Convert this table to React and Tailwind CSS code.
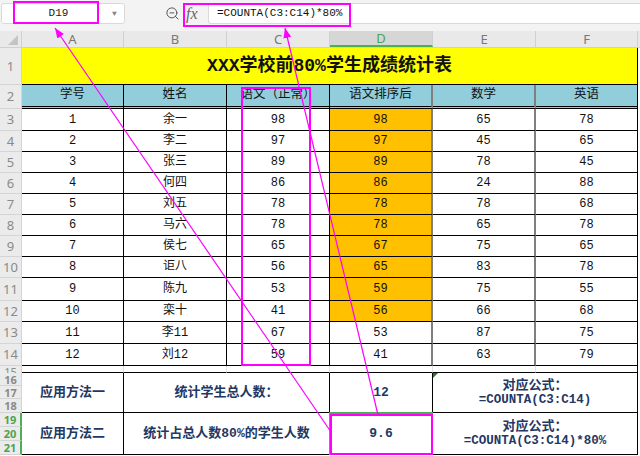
import { ZoomOut } from 'lucide-react';

const students = [
  [1, '余一', 98, 98, 65, 78],
  [2, '李二', 97, 97, 45, 65],
  [3, '张三', 89, 89, 78, 45],
  [4, '何四', 86, 86, 24, 88],
  [5, '刘五', 78, 78, 78, 68],
  [6, '马六', 78, 78, 65, 78],
  [7, '侯七', 65, 67, 75, 65],
  [8, '讵八', 56, 65, 83, 78],
  [9, '陈九', 53, 59, 75, 55],
  [10, '栾十', 41, 56, 66, 68],
  [11, '李11', 67, 53, 87, 75],
  [12, '刘12', 59, 41, 63, 79],
];

const rowHeights = [
  'h-[22px]', 'h-[21px]', 'h-[21px]', 'h-[21px]', 'h-[21px]', 'h-[21px]',
  'h-[21px]', 'h-[21px]', 'h-[23px]', 'h-[21px]', 'h-[22px]', 'h-[22px]',
];

const cols = ['A', 'B', 'C', 'D', 'E', 'F'];
const colWidths = ['w-[102px]', 'w-[103px]', 'w-[103px]', 'w-[103px]', 'w-[103px]', 'w-[102px]'];

function RowNum({ n, className = '', active = false }) {
  return (
    <div
      className={`w-[22px] shrink-0 flex items-center justify-center bg-[#ebebeb] border-b border-[#d4d4d4] font-['Noto_Sans',sans-serif] leading-none overflow-hidden ${
        active ? 'text-[#4ea34e] border-r-2 border-r-[#4caf50]' : 'text-[#8a8a8a] border-r border-r-[#d4d4d4]'
      } ${className}`}
    >
      {n}
    </div>
  );
}

function Toolbar() {
  return (
    <div className="h-[31px] flex items-start pt-[3px] bg-[#f3f3f3]">
      <div className="ml-[1px] w-[124px] h-[21px] bg-white border border-[#d9d9d9] rounded-[3px] flex items-center">
        <span className="flex-1 text-center pl-[3px] text-[11px] text-[#222]">D19</span>
        <span className="w-[12px] text-[8px] text-[#888] leading-none">▼</span>
      </div>
      <div className="ml-[40px] mt-[3px] text-[#555]">
        <ZoomOut size={15} strokeWidth={1.6} />
      </div>
      <span className="ml-[6px] mt-[1px] w-[20px] text-[16px] italic text-[#666] font-['Liberation_Serif',serif] leading-[20px]">
        fx
      </span>
      <div className="ml-[2px] flex-1 h-[21px] bg-white border border-r-0 border-[#d9d9d9] rounded-l-[3px] flex items-center pl-[8px] text-[11px] text-[#111]">
        =COUNTA(C3:C14)*80%
      </div>
    </div>
  );
}

function ColumnHeader() {
  return (
    <div className="flex h-[17px] bg-[#e9e9e9] border-b border-[#d0d0d0] font-['Noto_Sans',sans-serif]">
      <div className="w-[22px] relative border-r border-[#d0d0d0]">
        <svg className="absolute right-[3px] bottom-[2px]" width="10" height="10">
          <polygon points="10,0 10,10 0,10" fill="#c4c4c4" />
        </svg>
      </div>
      {cols.map((c, i) => (
        <div
          key={c}
          className={`${colWidths[i]} flex items-center justify-center text-[13px] leading-none border-r border-[#d0d0d0] ${
            c === 'D' ? 'bg-[#d6d6d6] text-[#4ea34e] border-b-2 border-b-[#4caf50]' : 'text-[#777]'
          }`}
        >
          {c}
        </div>
      ))}
      <div className="w-[2px]" />
    </div>
  );
}

export default function App() {
  return (
    <div className="relative w-[640px] h-[456px] overflow-hidden bg-white font-['Liberation_Mono','Noto_Sans_CJK_SC',monospace] text-[#111]">
      <Toolbar />
      <ColumnHeader />

      {/* row 1 - title */}
      <div className="flex h-[37px]">
        <RowNum n={1} className="text-[13px]" />
        <div className="w-[616px] bg-[#ffff00] border-r border-b border-black flex items-center justify-center text-[18px] font-bold">
          XXX学校前80%学生成绩统计表
        </div>
        <div className="w-[2px] bg-white" />
      </div>

      {/* row 2 - headers */}
      <div className="flex h-[24px] text-[12.5px]">
        <RowNum n={2} className="text-[13px]" />
        <div className="w-[102px] bg-[#92cddc] border-r border-black border-b-[3px] border-b-black border-double flex items-center justify-center">学号</div>
        <div className="w-[103px] bg-[#92cddc] border-r border-black border-b-[3px] border-b-black border-double flex items-center justify-center">姓名</div>
        <div className="w-[103px] bg-[#92cddc] border-r border-black border-b-[3px] border-b-black border-double flex items-center justify-center whitespace-nowrap">语文（正常）</div>
        <div className="w-[103px] bg-[#92cddc] border-r-2 border-r-[#7f7f7f] border-b-[3px] border-b-black border-double flex items-center justify-center">语文排序后</div>
        <div className="w-[103px] bg-[#92cddc] border-r-2 border-r-[#7f7f7f] border-b-[3px] border-b-black border-double flex items-center justify-center">数学</div>
        <div className="w-[102px] bg-[#92cddc] border-r border-black border-b-[3px] border-b-black border-double flex items-center justify-center">英语</div>
        <div className="w-[2px] bg-white" />
      </div>

      {/* rows 3-14 */}
      {students.map((s, i) => (
        <div key={s[0]} className={`flex ${rowHeights[i]} text-[12px]`}>
          <RowNum n={i + 3} className="text-[13px]" />
          <div className="w-[102px] bg-white border-r border-b border-black flex items-center justify-center">{s[0]}</div>
          <div className="w-[103px] bg-white border-r border-b border-black flex items-center justify-center">{s[1]}</div>
          <div className="w-[103px] bg-white border-r border-b border-black flex items-center justify-center">{s[2]}</div>
          <div
            className={`w-[103px] border-r-2 border-r-[#7f7f7f] border-b border-b-black flex items-center justify-center ${
              i < 10 ? 'bg-[#ffc000]' : 'bg-white'
            }`}
          >
            {s[3]}
          </div>
          <div className="w-[103px] bg-white border-r-2 border-r-[#7f7f7f] border-b border-b-black flex items-center justify-center">{s[4]}</div>
          <div className="w-[102px] bg-white border-r border-b border-black flex items-center justify-center">{s[5]}</div>
          <div className="w-[2px] bg-white" />
        </div>
      ))}

      {/* row 15 */}
      <div className="flex h-[7px]">
        <div className="w-[22px] h-[7px] overflow-hidden bg-[#ebebeb] border-r border-[#d4d4d4] text-[11px] leading-[11px] text-[#8a8a8a] text-center font-['Noto_Sans',sans-serif]">
          15
        </div>
        <div className="w-[102px] bg-white border-r border-[#e2e2e2] border-b border-b-black" />
        <div className="w-[103px] bg-white border-r border-[#e2e2e2] border-b border-b-black" />
        <div className="w-[103px] bg-white border-r border-[#e2e2e2] border-b border-b-black" />
        <div className="w-[103px] bg-white border-r border-[#e2e2e2] border-b border-b-black" />
        <div className="w-[103px] bg-white border-r border-[#e2e2e2] border-b border-b-black" />
        <div className="w-[102px] bg-white border-r border-black border-b border-b-black" />
        <div className="w-[2px] bg-white" />
      </div>

      {/* rows 16-18 */}
      <div className="flex h-[40px] font-bold text-[#1f3864] text-[13px]">
        <div className="w-[22px] flex flex-col">
          <RowNum n={16} className="h-[13px] text-[11px]" />
          <RowNum n={17} className="h-[13px] text-[11px]" />
          <RowNum n={18} className="h-[14px] text-[11px]" />
        </div>
        <div className="w-[102px] bg-white border-r border-b border-black flex items-center justify-center">应用方法一</div>
        <div className="w-[206px] bg-white border-r border-b border-black flex items-center justify-center">统计学生总人数：</div>
        <div className="w-[103px] bg-white border-r border-b border-black flex items-center justify-center">12</div>
        <div className="relative w-[205px] bg-white border-r border-b border-black flex flex-col items-center justify-center leading-[15px]">
          <span className="absolute left-0 top-0 w-0 h-0 border-t-[5px] border-t-[#1e7b34] border-r-[5px] border-r-transparent" />
          <span>对应公式：</span>
          <span className="text-[12.5px]">=COUNTA(C3:C14)</span>
        </div>
        <div className="w-[2px] bg-white" />
      </div>

      {/* rows 19-21 */}
      <div className="flex h-[42px] font-bold text-[#1f3864] text-[13px]">
        <div className="w-[22px] flex flex-col">
          <RowNum n={19} active className="h-[14px] text-[11px]" />
          <RowNum n={20} active className="h-[14px] text-[11px]" />
          <RowNum n={21} active className="h-[14px] text-[11px]" />
        </div>
        <div className="w-[102px] bg-white border-r border-b border-black flex items-center justify-center">应用方法二</div>
        <div className="w-[206px] bg-white border-r border-b border-black flex items-center justify-center">统计占总人数80%的学生人数</div>
        <div className="relative w-[103px] bg-white border-r border-b border-black flex items-center justify-center">
          <span className="absolute inset-[-1px] border-2 border-[#4caf50]" />
          9.6
        </div>
        <div className="w-[205px] bg-white border-r border-b border-black flex flex-col items-center justify-center leading-[15px]">
          <span>对应公式：</span>
          <span className="text-[12.5px]">=COUNTA(C3:C14)*80%</span>
        </div>
        <div className="w-[2px] bg-white" />
      </div>

      {/* annotation overlay */}
      <svg className="absolute inset-0 pointer-events-none" width="640" height="456">
        <defs>
          <marker id="ah" markerWidth="10" markerHeight="8" refX="10" refY="4" orient="auto" markerUnits="userSpaceOnUse">
            <path d="M0,0 L10,4 L0,8 Z" fill="#ff00ff" />
          </marker>
        </defs>
        <rect x="14" y="2" width="84" height="21" fill="none" stroke="#ff00ff" strokeWidth="2" />
        <rect x="184" y="4" width="166" height="22" fill="none" stroke="#ff00ff" strokeWidth="2" />
        <rect x="242" y="88" width="68" height="277" fill="none" stroke="#ff00ff" strokeWidth="2" />
        <rect x="331" y="415" width="101" height="39" fill="none" stroke="#ff00ff" strokeWidth="2" />
        <line x1="331" y1="432" x2="55" y2="28" stroke="#ff00ff" strokeWidth="1.2" markerEnd="url(#ah)" />
        <line x1="378" y1="415" x2="285" y2="28" stroke="#ff00ff" strokeWidth="1.2" markerEnd="url(#ah)" />
      </svg>
    </div>
  );
}
